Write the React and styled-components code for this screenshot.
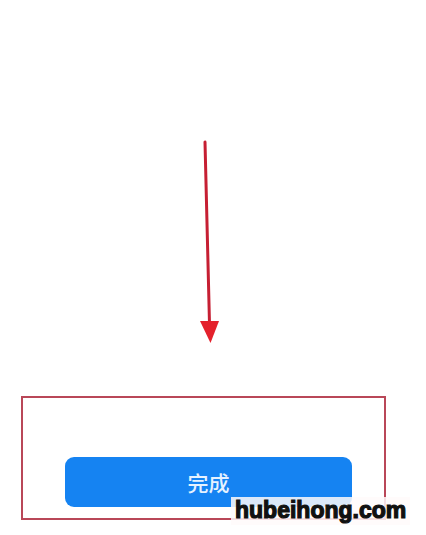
import styled, { createGlobalStyle } from "styled-components";

const Global = createGlobalStyle`
html, body {
  margin: 0;
  padding: 0;
  background: #ffffff;
}
body {
  font-family: "Noto Sans CJK SC", "Noto Sans", sans-serif;
}
`

export default function App() {
  return (
    <Page>
      <Global />
      <ArrowWrap>
        <svg width="30" height="206" viewBox="0 0 30 206">
          <line x1="10" y1="2" x2="14.5" y2="184" stroke="#c61f33" strokeWidth="3" strokeLinecap="round" />
          <polygon points="5,181 24,181 15.5,203" fill="#e4212c" />
        </svg>
      </ArrowWrap>
      <Frame>
        <DoneButton>完成</DoneButton>
      </Frame>
      <Watermark>hubeihong.com</Watermark>
    </Page>
  )
}

const Page = styled.div`
position: relative;
width: 426px;
height: 535px;
overflow: hidden;
padding-top: 140px;
box-sizing: border-box;
background: #ffffff;
`

const ArrowWrap = styled.div`
margin-left: 195px;
height: 206px;
svg {
  display: block;
}
`

const Frame = styled.div`
margin-top: 50px;
margin-left: 21px;
width: 365px;
height: 124px;
box-sizing: border-box;
border: 2px solid #b94758;
padding-top: 59px;
padding-left: 42px;
`

const DoneButton = styled.button`
display: flex;
align-items: center;
justify-content: center;
width: 287px;
height: 50px;
border: none;
border-radius: 9px;
background-color: #1583f2;
color: #e6f2ff;
font-family: "Noto Sans CJK SC", sans-serif;
font-weight: 500;
font-size: 21px;
padding: 0;
`

const Watermark = styled.div`
position: absolute;
left: 231px;
top: 497px;
padding: 0 4px;
height: 28px;
line-height: 26px;
background: rgba(255, 250, 250, 0.85);
font-family: "Liberation Sans", sans-serif;
font-weight: 700;
font-size: 23px;
color: #111111;
-webkit-text-stroke: 1.2px #111111;
`
